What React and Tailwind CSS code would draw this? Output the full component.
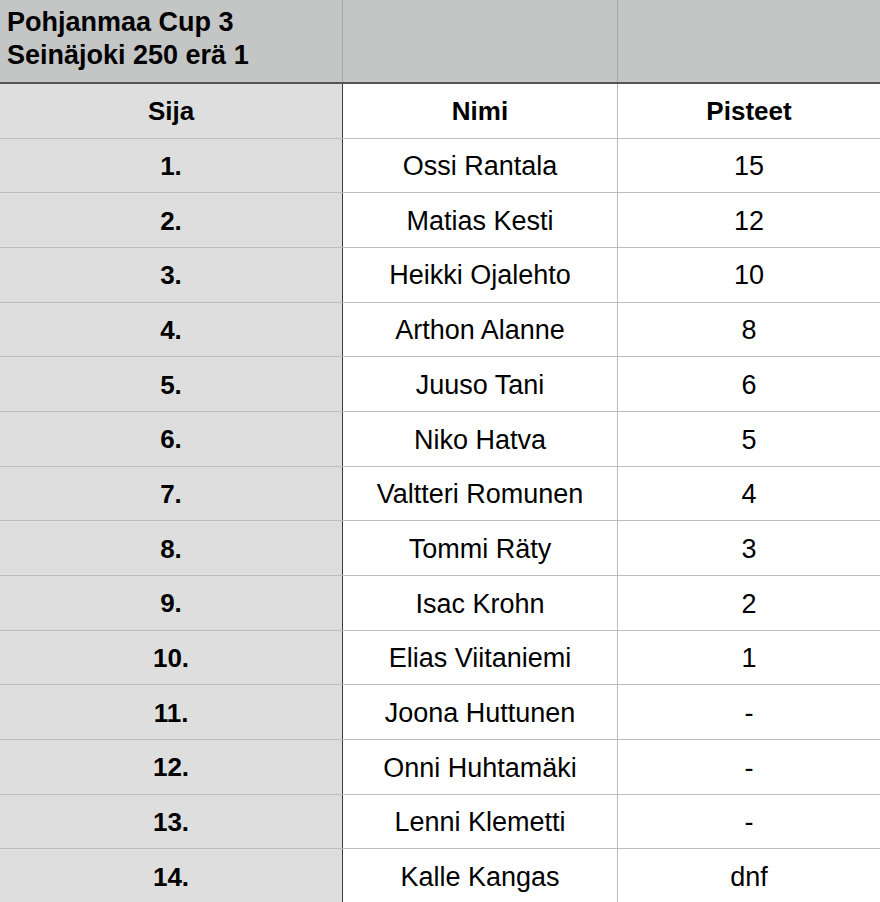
import React from 'react';

const rows = [
  ['1.', 'Ossi Rantala', '15'],
  ['2.', 'Matias Kesti', '12'],
  ['3.', 'Heikki Ojalehto', '10'],
  ['4.', 'Arthon Alanne', '8'],
  ['5.', 'Juuso Tani', '6'],
  ['6.', 'Niko Hatva', '5'],
  ['7.', 'Valtteri Romunen', '4'],
  ['8.', 'Tommi Räty', '3'],
  ['9.', 'Isac Krohn', '2'],
  ['10.', 'Elias Viitaniemi', '1'],
  ['11.', 'Joona Huttunen', '-'],
  ['12.', 'Onni Huhtamäki', '-'],
  ['13.', 'Lenni Klemetti', '-'],
  ['14.', 'Kalle Kangas', 'dnf'],
];

const Row = ({ first, second, third }) => (
  <div className="flex h-[54.7px] border-b border-[#bdbdbd] pt-[2px]">
    <div className="w-[343px] shrink-0 flex items-center justify-center bg-[#dedede] border-r border-[#3c3c3c] font-bold text-[26px] -mt-[2px] pt-[2px]">
      {first}
    </div>
    <div className="w-[275px] shrink-0 flex items-center justify-center border-r border-[#bdbdbd] -mt-[2px] pt-[2px]">
      {second}
    </div>
    <div className="flex-1 flex items-center justify-center">{third}</div>
  </div>
);

const App = () => {
  return (
    <div className="w-[880px] h-[902px] overflow-hidden bg-white text-black text-[27px] font-['Liberation_Sans',Arial,sans-serif]">
      <div className="flex h-[84px] bg-[#c4c6c5] border-b-2 border-[#555555]">
        <div className="w-[343px] shrink-0 border-r border-[#a9abaa] pl-[7px] pt-[6px] font-bold text-[27px] leading-[33px]">
          <div>Pohjanmaa Cup 3</div>
          <div>Seinäjoki 250 erä 1</div>
        </div>
        <div className="w-[275px] shrink-0 border-r border-[#a9abaa]" />
        <div className="flex-1" />
      </div>
      <div className="flex h-[54.5px] border-b border-[#bdbdbd] font-bold text-[26px]">
        <div className="w-[343px] shrink-0 flex items-center justify-center bg-[#dedede] border-r border-[#3c3c3c] pt-[2px]">
          Sija
        </div>
        <div className="w-[275px] shrink-0 flex items-center justify-center border-r border-[#bdbdbd] pt-[2px]">
          Nimi
        </div>
        <div className="flex-1 flex items-center justify-center pt-[2px]">Pisteet</div>
      </div>
      {rows.map((r) => (
        <Row key={r[0]} first={r[0]} second={r[1]} third={r[2]} />
      ))}
    </div>
  );
};

export default App;
